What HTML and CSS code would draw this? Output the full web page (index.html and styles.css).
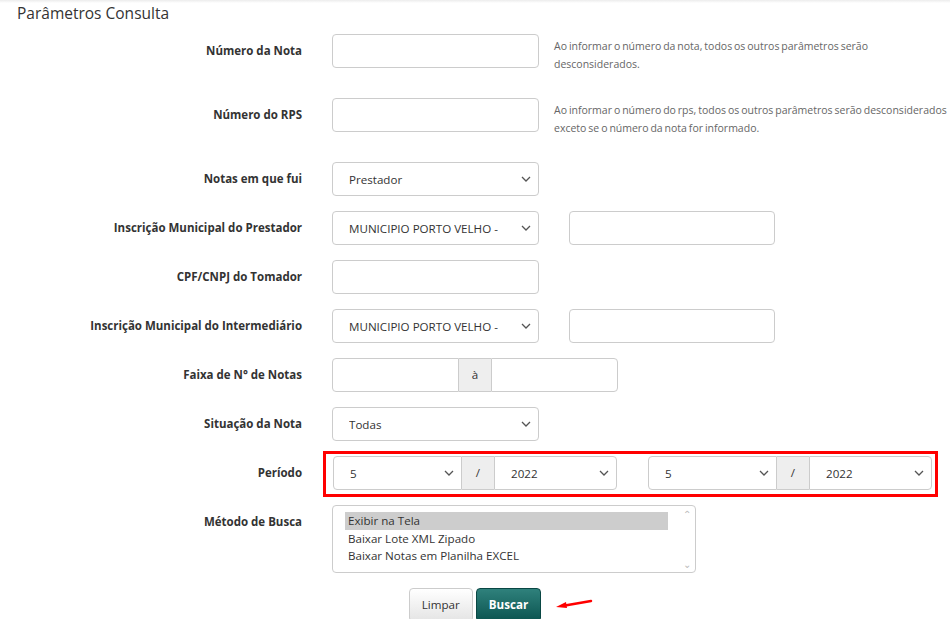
FILE: index.html
```html
<!DOCTYPE html>
<html lang="pt-BR">

<head>
    <meta charset="UTF-8">
    <meta name="viewport" content="width=device-width, initial-scale=1.0">
    <title>Consulta de Notas</title>
    <link rel="stylesheet" href="styles.css">
</head>

<body>
    <div class="top-shadow"></div>
    <div class="panel">
        <h4 class="panel-title">Parâmetros Consulta</h4>

        <form class="form">
            <div class="form-row">
                <label>Número da Nota</label>
                <div class="field">
                    <input type="text" class="control">
                    <p class="help">Ao informar o número da nota, todos os outros parâmetros serão desconsiderados.</p>
                </div>
            </div>

            <div class="form-row">
                <label>Número do RPS</label>
                <div class="field">
                    <input type="text" class="control">
                    <p class="help">Ao informar o número do rps, todos os outros parâmetros serão desconsiderados exceto se o número da nota for informado.</p>
                </div>
            </div>

            <div class="form-row">
                <label>Notas em que fui</label>
                <div class="field">
                    <select class="control">
                        <option>Prestador</option>
                        <option>Tomador</option>
                        <option>Intermediário</option>
                    </select>
                </div>
            </div>

            <div class="form-row">
                <label>Inscrição Municipal do Prestador</label>
                <div class="field">
                    <select class="control">
                        <option>MUNICIPIO PORTO VELHO - RO</option>
                    </select>
                    <input type="text" class="control extra">
                </div>
            </div>

            <div class="form-row">
                <label>CPF/CNPJ do Tomador</label>
                <div class="field">
                    <input type="text" class="control">
                </div>
            </div>

            <div class="form-row">
                <label>Inscrição Municipal do Intermediário</label>
                <div class="field">
                    <select class="control">
                        <option>MUNICIPIO PORTO VELHO - RO</option>
                    </select>
                    <input type="text" class="control extra">
                </div>
            </div>

            <div class="form-row">
                <label>Faixa de N° de Notas</label>
                <div class="field">
                    <div class="input-group range">
                        <input type="text" class="control">
                        <span class="addon">à</span>
                        <input type="text" class="control">
                    </div>
                </div>
            </div>

            <div class="form-row">
                <label>Situação da Nota</label>
                <div class="field">
                    <select class="control">
                        <option>Todas</option>
                        <option>Normal</option>
                        <option>Cancelada</option>
                    </select>
                </div>
            </div>

            <div class="form-row">
                <label>Período</label>
                <div class="field period">
                    <div class="input-group">
                        <select class="control month">
                            <option>5</option>
                        </select>
                        <span class="addon">/</span>
                        <select class="control year">
                            <option>2022</option>
                        </select>
                    </div>
                    <div class="input-group">
                        <select class="control month">
                            <option>5</option>
                        </select>
                        <span class="addon">/</span>
                        <select class="control year">
                            <option>2022</option>
                        </select>
                    </div>
                </div>
            </div>

            <div class="form-row">
                <label>Método de Busca</label>
                <div class="field">
                    <div class="listbox" role="listbox">
                        <ul>
                            <li class="selected">Exibir na Tela</li>
                            <li>Baixar Lote XML Zipado</li>
                            <li>Baixar Notas em Planilha EXCEL</li>
                        </ul>
                        <div class="scroll">
                            <span>&#8963;</span>
                            <span>&#8964;</span>
                        </div>
                    </div>
                </div>
            </div>

            <div class="actions">
                <button type="reset" class="btn btn-default">Limpar</button>
                <button type="button" class="btn btn-primary">Buscar</button>
                <svg class="arrow" width="40" height="12" viewBox="0 0 40 12">
                    <path d="M36 2 L10 6.5" stroke="#f00" stroke-width="2.5" stroke-linecap="round" fill="none" />
                    <path d="M1 8 L11 3 L12 9 Z" fill="#f00" />
                </svg>
            </div>
        </form>
    </div>
</body>

</html>
```

FILE: styles.css
```css
body {
    margin: 0;
    font-family: 'Open Sans', 'Liberation Sans', sans-serif;
    color: #333;
    background-color: #fff;
    overflow-x: hidden;
}

.top-shadow {
    height: 3px;
    background: linear-gradient(#ececec, #fff);
}

.panel-title {
    margin: 0;
    padding-left: 17px;
    font-size: 15.5px;
    font-weight: normal;
    line-height: 21px;
    color: #333;
}

.form {
    margin-top: 10px;
}

.form-row {
    display: grid;
    grid-template-columns: 302px 1fr;
    column-gap: 30px;
    align-items: start;
    margin-bottom: 15px;
}

.form-row label {
    text-align: right;
    font-size: 11.5px;
    font-weight: bold;
    line-height: 34px;
}

.field {
    display: flex;
    align-items: flex-start;
}

.control {
    box-sizing: border-box;
    width: 207px;
    height: 34px;
    border: 1px solid #ccc;
    border-radius: 4px;
    background-color: #fff;
    font-family: inherit;
    font-size: 11.6px;
    color: #333;
    padding: 0 16px;
}

select.control {
    appearance: none;
    -webkit-appearance: none;
    padding-right: 40px;
    background-image: url("data:image/svg+xml,%3Csvg xmlns='http://www.w3.org/2000/svg' width='10' height='6' viewBox='0 0 10 6'%3E%3Cpath d='M1 1 L5 5 L9 1' stroke='%23555' stroke-width='1.3' fill='none'/%3E%3C/svg%3E");
    background-repeat: no-repeat;
    background-position: right 7px center;
}

.control.extra {
    margin-left: 30px;
    width: 206px;
}

.help {
    margin: 3px 0 10px 15px;
    font-size: 10.5px;
    word-spacing: -0.8px;
    line-height: 18px;
    color: #666;
    width: 394px;
}

.input-group {
    display: flex;
}

.input-group .control {
    width: 127px;
}

.input-group .control:first-child {
    border-top-right-radius: 0;
    border-bottom-right-radius: 0;
}

.input-group .control:last-child {
    border-top-left-radius: 0;
    border-bottom-left-radius: 0;
}

.addon {
    box-sizing: border-box;
    width: 32px;
    height: 34px;
    line-height: 32px;
    text-align: center;
    font-size: 11.6px;
    background-color: #eee;
    border: 1px solid #ccc;
    border-left: none;
    border-right: none;
}

.period {
    position: relative;
    margin-left: 1px;
}

.period .input-group + .input-group {
    margin-left: 31px;
}

.period .control.month {
    width: 129px;
}

.period .control.year {
    width: 123px;
}

/* marcação vermelha sobre o período */
.period::after {
    content: '';
    position: absolute;
    top: -5px;
    left: -10px;
    bottom: -7px;
    width: 609px;
    border: 3px solid #f00;
}

.listbox {
    box-sizing: border-box;
    width: 364px;
    height: 68px;
    border: 1px solid #ccc;
    border-radius: 4px;
    display: flex;
    background-color: #fff;
}

.listbox ul {
    list-style: none;
    margin: 6px 0 0 12px;
    padding: 0;
    width: 323px;
    font-size: 11.6px;
}

.listbox li {
    padding-left: 3px;
    line-height: 17.5px;
}

.listbox li.selected {
    background-color: #cdcdcd;
}

.scroll {
    margin-left: auto;
    width: 16px;
    display: flex;
    flex-direction: column;
    justify-content: space-between;
    align-items: center;
    font-size: 10px;
    color: #bbb;
    line-height: 14px;
    padding: 1px 0;
}

.actions {
    position: relative;
    text-align: center;
    font-size: 0;
}

.btn {
    box-sizing: border-box;
    height: 34px;
    padding: 0 12px 1px;
    border-radius: 4px;
    font-family: inherit;
    font-size: 11.6px;
    cursor: pointer;
    vertical-align: top;
}

.btn + .btn {
    margin-left: 3px;
}

.btn-default {
    color: #333;
    border: 1px solid #ccc;
    background: linear-gradient(#fff, #e4e4e4);
}

.btn-primary {
    color: #fff;
    font-weight: bold;
    border: 1px solid #0a4744;
    background: linear-gradient(#2f817c, #0b5450);
}

.arrow {
    position: absolute;
    left: 555px;
    top: 11px;
}
```
